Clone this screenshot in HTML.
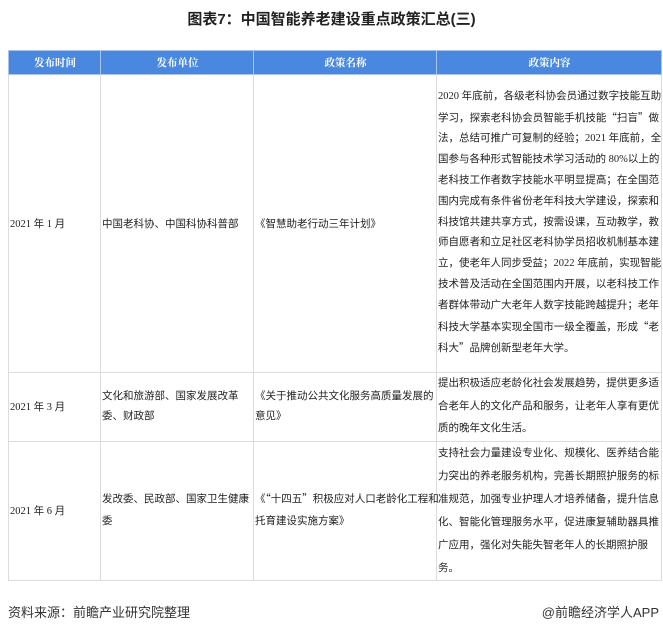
<!DOCTYPE html>
<html><head><meta charset="utf-8"><style>
body{margin:0;background:#fff;width:663px;height:633px;position:relative;overflow:hidden;font-family:"Liberation Sans","Noto Sans CJK SC",sans-serif;color:#222}
.t{position:absolute;top:8px;left:0;width:663px;text-align:center;font-size:15px;font-weight:bold;color:#222}
table{position:absolute;left:8px;top:50px;border-collapse:collapse;table-layout:fixed;width:653px}
td,th{border:1px solid #dcdcdc;font-size:10.5px;padding:0 0 0 1px;vertical-align:middle;text-align:left;font-family:"Liberation Serif","Noto Sans CJK SC",sans-serif;white-space:nowrap}
th{background:#4a88df;color:#fff;height:23px;text-align:center;font-family:"Noto Serif CJK SC",serif;font-weight:bold;font-size:10.5px;border-color:#a9c4ee}
td.c4{padding:0 2px 0 1px;font-size:10.5px}
td.c4 span{display:block;text-align:justify;text-align-last:justify;white-space:nowrap}
td.c4 span.l{text-align-last:left}
q{quotes:none;font-family:"Noto Sans CJK SC",sans-serif}
.f1{position:absolute;left:8px;top:602px;font-size:13px;color:#333}
.f2{position:absolute;right:4px;top:602px;font-size:13px;color:#333}
</style></head><body>
<div class="t">图表7：中国智能养老建设重点政策汇总(三)</div>
<table>
<colgroup><col style="width:92px"><col style="width:153px"><col style="width:183px"><col style="width:225px"></colgroup>
<tr><th>发布时间</th><th>发布单位</th><th>政策名称</th><th>政策内容</th></tr>
<tr style="height:298px"><td>2021 年 1 月</td><td>中国老科协、中国科协科普部</td><td>《智慧助老行动三年计划》</td><td class="c4" style="line-height:20.8px"><span>2020 年底前，各级老科协会员通过数字技能互助</span><span>学习，探索老科协会员智能手机技能<q>“</q>扫盲<q>”</q>做</span><span>法，总结可推广可复制的经验；2021 年底前，全</span><span>国参与各种形式智能技术学习活动的 80%以上的</span><span>老科技工作者数字技能水平明显提高；在全国范</span><span>围内完成有条件省份老年科技大学建设，探索和</span><span>科技馆共建共享方式，按需设课，互动教学，教</span><span>师自愿者和立足社区老科协学员招收机制基本建</span><span>立，使老年人同步受益；2022 年底前，实现智能</span><span>技术普及活动在全国范围内开展，以老科技工作</span><span>者群体带动广大老年人数字技能跨越提升；老年</span><span>科技大学基本实现全国市一级全覆盖，形成<q>“</q>老</span><span class="l">科大<q>”</q>品牌创新型老年大学。</span></td></tr>
<tr style="height:68px"><td>2021 年 3 月</td><td style="line-height:20px">文化和旅游部、国家发展改革<br>委、财政部</td><td style="line-height:20px">《关于推动公共文化服务高质量发展的<br>意见》</td><td class="c4" style="line-height:22.5px"><span>提出积极适应老龄化社会发展趋势，提供更多适</span><span>合老年人的文化产品和服务，让老年人享有更优</span><span class="l">质的晚年文化生活。</span></td></tr>
<tr style="height:138px"><td>2021 年 6 月</td><td style="line-height:22px">发改委、民政部、国家卫生健康<br>委</td><td style="line-height:22px">《<q>“</q>十四五<q>”</q>积极应对人口老龄化工程和<br>托育建设实施方案》</td><td class="c4" style="line-height:23px"><span>支持社会力量建设专业化、规模化、医养结合能</span><span>力突出的养老服务机构，完善长期照护服务的标</span><span>准规范，加强专业护理人才培养储备，提升信息</span><span>化、智能化管理服务水平，促进康复辅助器具推</span><span class="l">广应用，强化对失能失智老年人的长期照护服</span><span class="l">务。</span></td></tr>
</table>
<div class="f1">资料来源：前瞻产业研究院整理</div>
<div class="f2">@前瞻经济学人APP</div>
</body></html>
